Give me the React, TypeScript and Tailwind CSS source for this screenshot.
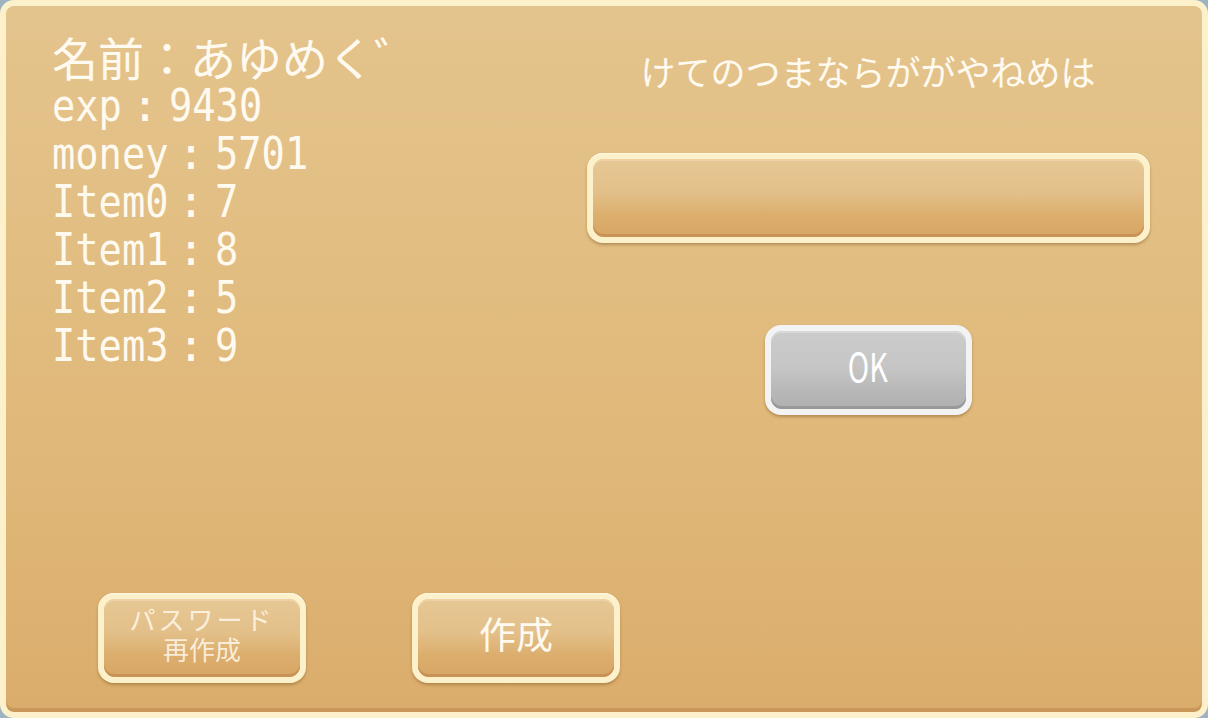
import React from "react";

const jp = "font-['Noto_Sans_CJK_JP','Noto_Sans',sans-serif]";

// half-width latin, narrowed to the 23px cell of the game font
const Mono = ({ t }: { t: string }) => (
  <span className="inline-block whitespace-nowrap" style={{ width: t.length * 23 }}>
    <span className="inline-block origin-left scale-x-[0.86] font-['DejaVu_Sans_Mono',monospace]">{t}</span>
  </span>
);

const Colon = () => (
  <span className="inline-block w-[48px] text-center font-['DejaVu_Sans_Mono',monospace]">:</span>
);

const Stat = ({ label, value }: { label: string; value: string }) => (
  <div className="h-[48px] whitespace-nowrap leading-[48px]">
    <Mono t={label} />
    <Colon />
    <Mono t={value} />
  </div>
);

const CreamFrame = ({ className, children }: { className: string; children?: React.ReactNode }) => (
  <div className={`${className} shrink-0 rounded-[16px] bg-[#fcf1cb] p-[6px] shadow-[0_2px_3px_rgba(120,78,25,0.4),inset_0_1px_0_#fff9e4]`}>
    <div className="flex h-full items-center justify-center rounded-[11px] bg-[linear-gradient(180deg,#e6c793_0%,#e3c08a_42%,#dcae6e_72%,#d8a664_100%)] shadow-[inset_0_-3px_0_#c99356,inset_0_2px_0_#ecd2a4]">
      {children}
    </div>
  </div>
);

const stats: [string, string][] = [
  ["exp", "9430"],
  ["money", "5701"],
  ["Item0", "7"],
  ["Item1", "8"],
  ["Item2", "5"],
  ["Item3", "9"],
];

export default function App() {
  return (
    <div className="h-[718px] w-[1208px] bg-[#9db3c2]">
      <div className="flex h-full flex-col rounded-[14px] border-[6px] border-[#fcf1cb] bg-[linear-gradient(180deg,#e4c48d_0%,#e0b97a_60%,#dbad6c_100%)] text-[#fffaf0] shadow-[inset_0_-4px_0_#c9975a]">
        <div className="flex">
          {/* stats */}
          <div className="w-[574px] pl-[46px] pt-[26px] text-[45px]">
            <div className={`${jp} h-[48px] whitespace-nowrap text-[46px] leading-[48px]`}>名前：あゆめく゛</div>
            {stats.map(([l, v]) => (
              <Stat key={l} label={l} value={v} />
            ))}
          </div>

          {/* prompt, input, OK */}
          <div className="flex w-[576px] flex-col items-center pt-[41px]">
            <div className={`${jp} h-[48px] whitespace-nowrap text-[35px] leading-[48px]`}>けてのつまならががやねめは</div>
            <CreamFrame className="mt-[58px] h-[90px] w-[563px]" />
            <div className="mt-[82px] h-[90px] w-[207px] rounded-[16px] bg-[#f3f3f3] p-[6px] shadow-[0_2px_3px_rgba(110,75,30,0.4)]">
              <div className="flex h-full items-center justify-center rounded-[11px] bg-[linear-gradient(180deg,#cbcbcb_0%,#c6c6c6_45%,#b8b8b8_75%,#b0b0b0_100%)] shadow-[inset_0_-3px_0_#999999,inset_0_2px_0_#d8d8d8]">
                <span className={`${jp} -mt-[10px] inline-block scale-x-[0.72] text-[40px] leading-none text-white`}>OK</span>
              </div>
            </div>
          </div>
        </div>

        {/* bottom buttons */}
        <div className="mt-auto flex gap-[106px] pb-[29px] pl-[92px]">
          <CreamFrame className="h-[90px] w-[208px]">
            <div className={`${jp} -mt-[8px] text-center text-[26px] leading-[30px] text-[#fff8ea]/85`}>
              <div className="tracking-[3px]">パスワード</div>
              <div>再作成</div>
            </div>
          </CreamFrame>
          <CreamFrame className="h-[90px] w-[208px]">
            <span className={`${jp} -mt-[10px] text-[37px] leading-none`}>作成</span>
          </CreamFrame>
        </div>
      </div>
    </div>
  );
}
